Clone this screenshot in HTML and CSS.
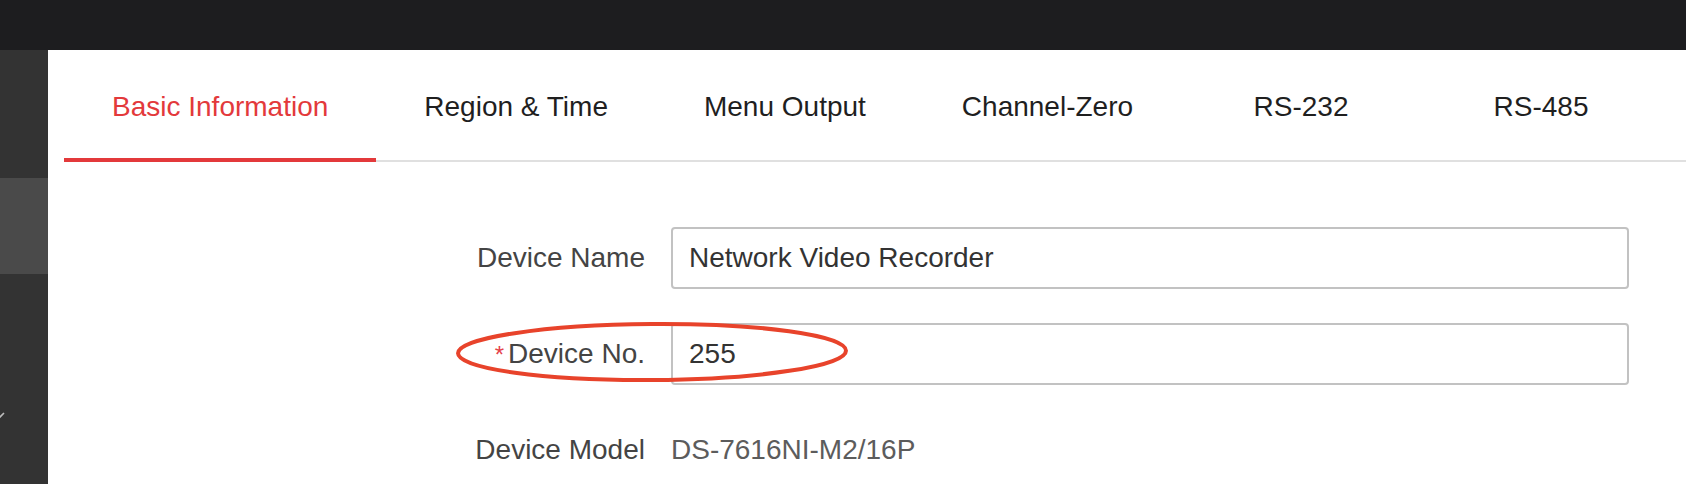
FILE: index.html
```html
<!DOCTYPE html>
<html lang="en">
<head>
<meta charset="utf-8">
<title>Basic Information</title>
<link rel="stylesheet" href="styles.css">
</head>
<body>
<div class="topbar"></div>
<div class="main">
  <nav class="sidebar">
    <div class="side-item"></div>
    <div class="side-item active"></div>
    <div class="side-item with-chevron">
      <svg class="chevron" width="12" height="8" viewBox="0 0 12 8"><path d="M1 1 L6 6 L11 1" fill="none" stroke="#bdbdbd" stroke-width="1.6"/></svg>
    </div>
  </nav>
  <section class="panel">
    <div class="tabs">
      <div class="tab active">Basic Information</div>
      <div class="tab">Region &amp; Time</div>
      <div class="tab">Menu Output</div>
      <div class="tab">Channel-Zero</div>
      <div class="tab">RS-232</div>
      <div class="tab">RS-485</div>
    </div>
    <div class="form">
      <div class="row">
        <label class="label">Device Name</label>
        <div class="input">Network Video Recorder</div>
      </div>
      <div class="row">
        <label class="label"><span class="req">*</span>Device No.</label>
        <div class="input">255</div>
        <svg class="mark" width="400" height="70" viewBox="0 0 400 70"><ellipse cx="200" cy="35" rx="194" ry="28" fill="none" stroke="#e8432b" stroke-width="4" transform="rotate(-0.4 200 35)"/></svg>
      </div>
      <div class="row">
        <label class="label">Device Model</label>
        <div class="value">DS-7616NI-M2/16P</div>
      </div>
    </div>
  </section>
</div>
</body>
</html>
```
FILE: styles.css
```css
* { box-sizing: border-box; }
html, body {
  margin: 0;
  padding: 0;
  width: 1686px;
  height: 484px;
  overflow: hidden;
  background: #ffffff;
  font-family: "Liberation Sans", Arial, sans-serif;
}
.topbar {
  height: 50px;
  background: #1d1d1f;
}
.main {
  display: flex;
  height: 434px;
}
.sidebar {
  width: 48px;
  flex: none;
  background: #333333;
  display: flex;
  flex-direction: column;
  overflow: hidden;
}
.side-item {
  height: 128px;
}
.side-item.active {
  height: 96px;
  background: #4a4a4a;
}
.side-item.with-chevron {
  height: 146px;
  display: flex;
  align-items: flex-end;
}
.chevron {
  margin-left: -7px;
  display: block;
}
.panel {
  flex: 1;
  background: #ffffff;
}
.tabs {
  margin-left: 16px;
  display: flex;
  border-bottom: 2px solid #e0e0e0;
}
.tab {
  font-size: 28px;
  line-height: 32px;
  color: #1f1f1f;
  text-align: center;
  white-space: nowrap;
  min-width: 240px;
  padding: 41px 48px 35px;
  border-bottom: 4px solid transparent;
  margin-bottom: -2px;
}
.tab.active {
  color: #e3393b;
  border-bottom-color: #e3393b;
}
.form {
  margin-top: 65px;
  padding-right: 57px;
  display: flex;
  flex-direction: column;
  gap: 34px;
}
.row {
  position: relative;
  display: grid;
  grid-template-columns: 597px 1fr;
  column-gap: 26px;
  align-items: center;
  height: 62px;
}
.label {
  font-size: 28px;
  line-height: 32px;
  color: #444444;
  text-align: right;
  white-space: nowrap;
}
.req {
  color: #e5414a;
  font-size: 24px;
  margin-right: 4px;
}
.input {
  height: 62px;
  border: 2px solid #c2c2c2;
  border-radius: 4px;
  padding: 0 16px;
  font-size: 28px;
  line-height: 58px;
  color: #333333;
}
.value {
  font-size: 28px;
  line-height: 32px;
  color: #5c5c5c;
}
.mark {
  position: absolute;
  left: 404px;
  top: -6px;
  pointer-events: none;
}
```
